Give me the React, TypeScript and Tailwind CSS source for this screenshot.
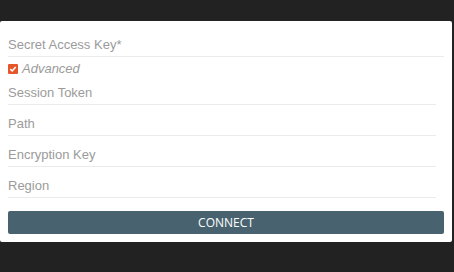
import React from "react";

function Field({ label, inner }: { label: string; inner?: boolean }) {
  return (
    <div
      className={
        "border-b border-[#ebebeb] pt-[11px] pb-[3px] text-[13px] leading-[16px] text-[#9b9b9b] " +
        (inner ? "mr-[8px]" : "")
      }
      style={{ fontFamily: '"Liberation Sans", Arial, sans-serif' }}
    >
      {label}
    </div>
  );
}

export default function App() {
  return (
    <div className="w-[454px] h-[272px] bg-[#222222] pt-[21px]">
      <div className="w-[452px] h-[221px] bg-white rounded-[2px] px-[8px] pt-[5px] flex flex-col">
        <Field label="Secret Access Key*" />
        <div
          className="flex items-center h-[10px] mt-[7px] text-[13px] leading-[10px] italic text-[#9b9b9b]"
          style={{ fontFamily: '"Liberation Sans", Arial, sans-serif' }}
        >
          <span className="w-[10px] h-[10px] bg-[#e5572a] rounded-[1px] flex items-center justify-center">
            <svg width="8" height="8" viewBox="0 0 8 8">
              <path d="M1.3 4.1 L3.2 5.9 L6.7 2" stroke="white" strokeWidth="1.5" fill="none" />
            </svg>
          </span>
          <span className="ml-[4px]">Advanced</span>
        </div>
        <Field label="Session Token" inner />
        <Field label="Path" inner />
        <Field label="Encryption Key" inner />
        <Field label="Region" inner />
        <button
          className="mt-[13px] h-[23px] w-full bg-[#48636f] rounded-[2px] text-white text-[12px] leading-[23px] text-center"
          style={{ fontFamily: '"Open Sans", sans-serif' }}
        >
          CONNECT
        </button>
      </div>
    </div>
  );
}
